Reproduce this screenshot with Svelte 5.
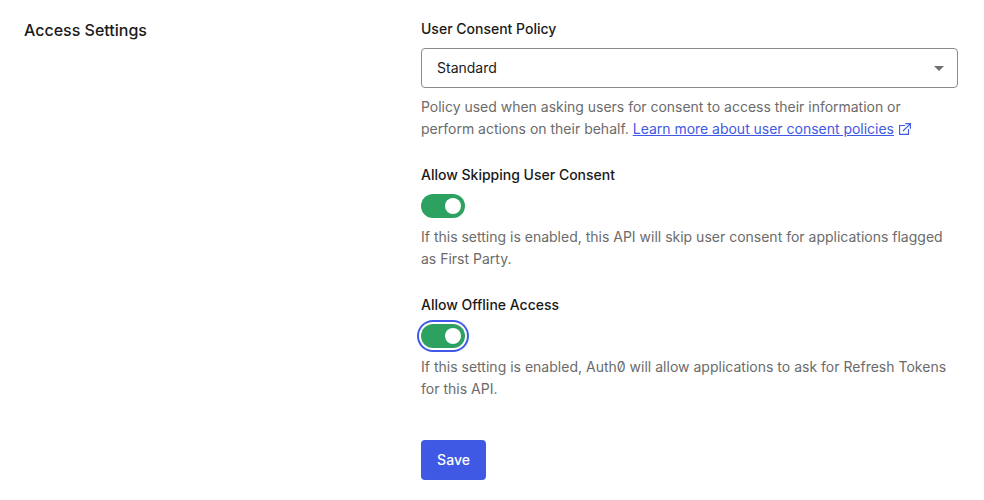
<script>
  let skip = $state(true);
  let offline = $state(true);
</script>

<main>
  <h2>Access Settings</h2>
  <form onsubmit={(e) => e.preventDefault()}>
    <section>
      <h3>User Consent Policy</h3>
      <button type="button" class="select">
        <span>Standard</span>
        <svg width="10" height="5" viewBox="0 0 10 5"><path d="M0 0h10L5 5z" fill="#6f6f6f" /></svg>
      </button>
      <p>
        <span class="policy">Policy used when asking users for consent to access their information or</span><br />perform actions on their behalf.
        <a href="#policies">Learn more about user consent policies</a><svg class="ext" width="12" height="12" viewBox="0 0 12 12" fill="none" stroke="#3f59e4" stroke-width="1.15"><path d="M6.2 2.5H.6v8.9h8.9V6M6.2.6h5.2v5.2M11.2.8 4 8" /></svg>
      </p>
    </section>
    <section>
      <h3>Allow Skipping User Consent</h3>
      <button type="button" class="switch" class:on={skip} aria-label="Allow Skipping User Consent" onclick={() => (skip = !skip)}><i></i></button>
      <p>If this setting is enabled, this API will skip user consent for applications flagged<br />as First Party.</p>
    </section>
    <section>
      <h3>Allow Offline Access</h3>
      <button type="button" class="switch focused" class:on={offline} aria-label="Allow Offline Access" onclick={() => (offline = !offline)}><i></i></button>
      <p class="offline">If this setting is enabled, Auth<span class="zero">0</span> will allow applications to ask for Refresh Tokens<br />for this API.</p>
    </section>
    <button class="save"><span>Save</span></button>
  </form>
</main>

<style>
  :global(body) { background: #fff; }
  main {
    box-sizing: border-box;
    height: 500px;
    padding: 18px 26px 0 24px;
    display: grid;
    grid-template-columns: 397px 537px;
    align-items: start;
    font-family: Inter, "Liberation Sans", sans-serif;
    color: #1a1a1a;
    overflow: hidden;
  }
  h2 { margin: 0; font-size: 16px; line-height: 24px; font-weight: 500; }
  form { display: flex; flex-direction: column; align-items: flex-start; }
  section { width: 537px; margin-bottom: 24px; }
  h3 { margin: 0 0 8px; font-size: 14px; line-height: 22px; font-weight: 500; }
  p { margin: 8px 0 0; font-size: 14px; line-height: 22px; color: #6b6b6b; white-space: nowrap; }
  .policy { letter-spacing: -0.014px; }
  .offline { letter-spacing: 0.01px; }
  a { color: #3f59e4; text-decoration: underline; letter-spacing: -0.02px; }
  .zero { font-feature-settings: "zero"; }
  .ext { vertical-align: -1px; margin-left: 5px; }
  button { font-family: inherit; padding: 0; border: 0; }
  .select {
    box-sizing: border-box;
    width: 100%;
    height: 40px;
    padding: 0 13px 0 15px;
    display: flex;
    align-items: center;
    justify-content: space-between;
    background: #fff;
    border: 1px solid #8b8b8b;
    border-radius: 4px;
    font-size: 14px;
    color: #1a1a1a;
  }
  .select span, .save span { display: block; padding-bottom: 2px; }
  .switch {
    display: flex;
    align-items: center;
    width: 44px;
    height: 24px;
    padding: 4px;
    box-sizing: border-box;
    border-radius: 12px;
    background: #8c8d92;
  }
  .switch i { width: 16px; height: 16px; border-radius: 50%; background: #fff; }
  .on { background: #2da160; justify-content: flex-end; }
  .focused { box-shadow: 0 0 0 2px #fff, 0 0 0 4px #3f59e4; }
  .save {
    width: 65px;
    height: 40px;
    margin-top: 16px;
    border-radius: 4px;
    background: #3f59e4;
    color: #fff;
    font-size: 14px;
    font-weight: 500;
  }
</style>
